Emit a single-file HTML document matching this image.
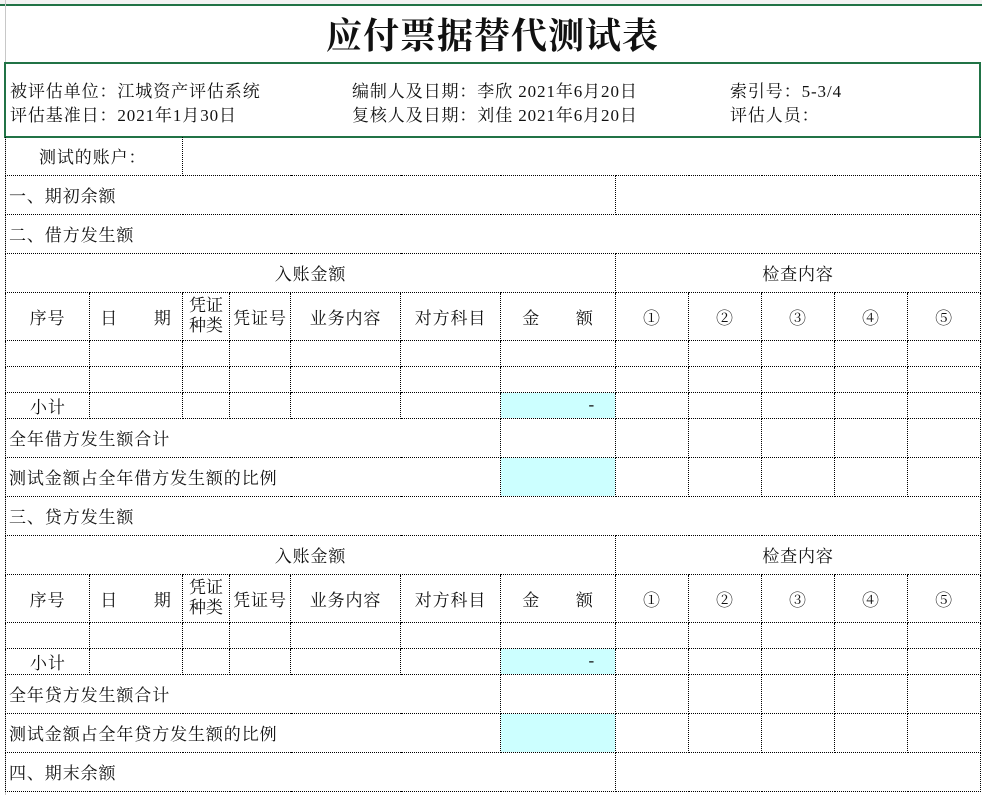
<!DOCTYPE html>
<html><head><meta charset="utf-8"><style>
body{margin:0;width:982px;height:795px;background:#fff;position:relative;overflow:hidden;font-family:"Liberation Serif","Noto Serif CJK SC",serif;font-size:17px;letter-spacing:0.9px;color:#111}
.strip{position:absolute;left:0;top:0;width:982px;height:4px;background:#f3f3f3}
.gl{position:absolute;left:0;top:4px;width:982px;height:2px;background:#217346}
.lg{position:absolute;left:5px;top:0;width:1px;height:795px;background:#c8c8c8}
.title{position:absolute;left:5px;top:6px;width:975px;height:57px;text-align:center;line-height:60px;font-size:36px;font-weight:bold;letter-spacing:1px}
.info{position:absolute;left:4px;top:62px;width:973px;height:72px;border:2px solid #217346}
.info span{position:absolute;white-space:nowrap}
table{position:absolute;left:5px;top:137px;width:975px;border-collapse:collapse;table-layout:fixed}
td{border:1px dotted #000;padding:0;white-space:nowrap;overflow:hidden}
.l{padding-left:3px}
.c{text-align:center}
.cy{background:#ccffff;text-align:right;padding-right:20px}
.sm{line-height:20px;text-align:center;white-space:normal;letter-spacing:0}
</style></head><body>
<div class="strip"></div><div class="gl"></div><div class="lg"></div>
<div class="title">应付票据替代测试表</div>
<div class="info">
<span style="left:4px;top:13px">被评估单位：江城资产评估系统</span>
<span style="left:4px;top:37px">评估基准日：2021年1月30日</span>
<span style="left:346px;top:13px">编制人及日期：李欣 2021年6月20日</span>
<span style="left:346px;top:37px">复核人及日期：刘佳 2021年6月20日</span>
<span style="left:724px;top:13px">索引号：5-3/4</span>
<span style="left:724px;top:37px">评估人员：</span>
</div>
<table>
<colgroup><col style="width:84px"><col style="width:93px"><col style="width:47px"><col style="width:61px"><col style="width:110px"><col style="width:100px"><col style="width:115px"><col style="width:73px"><col style="width:73px"><col style="width:73px"><col style="width:73px"><col style="width:73px"></colgroup>
<tr style="height:38px"><td colspan="2" style="padding-left:33px;border-top:none">测试的账户：</td><td colspan="10" style="border-top:none"></td></tr>
<tr style="height:39px"><td colspan="7" class="l">一、期初余额</td><td colspan="5"></td></tr>
<tr style="height:39px"><td colspan="12" class="l">二、借方发生额</td></tr>
<tr style="height:39px"><td colspan="7" class="c">入账金额</td><td colspan="5" class="c">检查内容</td></tr>
<tr style="height:48px"><td class="c">序号</td><td class="c">日　　期</td><td class="sm">凭证种类</td><td class="c">凭证号</td><td class="c">业务内容</td><td class="c">对方科目</td><td class="c">金　　额</td><td class="c">①</td><td class="c">②</td><td class="c">③</td><td class="c">④</td><td class="c">⑤</td></tr>
<tr style="height:26px"><td></td><td></td><td></td><td></td><td></td><td></td><td></td><td></td><td></td><td></td><td></td><td></td></tr>
<tr style="height:26px"><td></td><td></td><td></td><td></td><td></td><td></td><td></td><td></td><td></td><td></td><td></td><td></td></tr>
<tr style="height:26px"><td style="padding-left:24px">小计</td><td></td><td></td><td></td><td></td><td></td><td class="cy">-</td><td></td><td></td><td></td><td></td><td></td></tr>
<tr style="height:39px"><td colspan="6" class="l">全年借方发生额合计</td><td></td><td></td><td></td><td></td><td></td><td></td></tr>
<tr style="height:39px"><td colspan="6" class="l">测试金额占全年借方发生额的比例</td><td class="cy"></td><td></td><td></td><td></td><td></td><td></td></tr>
<tr style="height:39px"><td colspan="12" class="l">三、贷方发生额</td></tr>
<tr style="height:39px"><td colspan="7" class="c">入账金额</td><td colspan="5" class="c">检查内容</td></tr>
<tr style="height:48px"><td class="c">序号</td><td class="c">日　　期</td><td class="sm">凭证种类</td><td class="c">凭证号</td><td class="c">业务内容</td><td class="c">对方科目</td><td class="c">金　　额</td><td class="c">①</td><td class="c">②</td><td class="c">③</td><td class="c">④</td><td class="c">⑤</td></tr>
<tr style="height:26px"><td></td><td></td><td></td><td></td><td></td><td></td><td></td><td></td><td></td><td></td><td></td><td></td></tr>
<tr style="height:26px"><td style="padding-left:24px">小计</td><td></td><td></td><td></td><td></td><td></td><td class="cy">-</td><td></td><td></td><td></td><td></td><td></td></tr>
<tr style="height:39px"><td colspan="6" class="l">全年贷方发生额合计</td><td></td><td></td><td></td><td></td><td></td><td></td></tr>
<tr style="height:39px"><td colspan="6" class="l">测试金额占全年贷方发生额的比例</td><td class="cy"></td><td></td><td></td><td></td><td></td><td></td></tr>
<tr style="height:39px"><td colspan="7" class="l">四、期末余额</td><td colspan="5"></td></tr>
</table>
</body></html>
